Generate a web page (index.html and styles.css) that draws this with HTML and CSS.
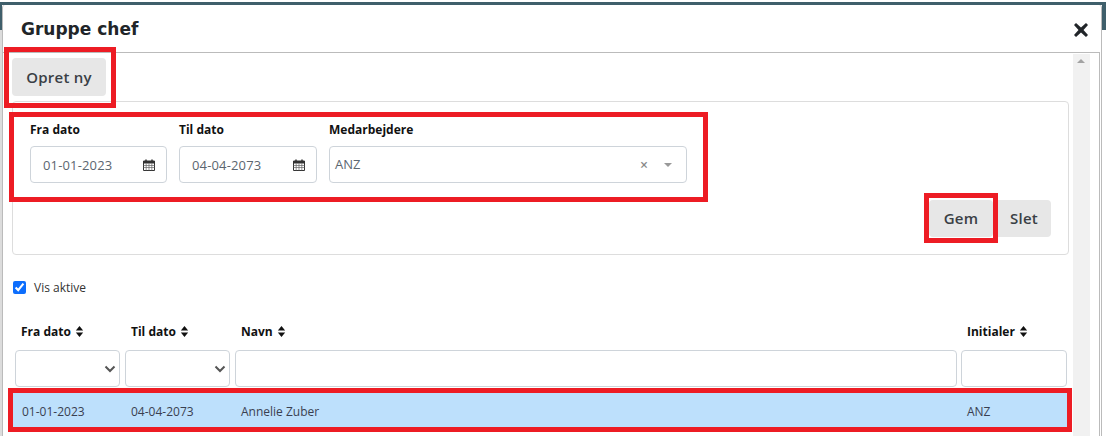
FILE: index.html
```html
<!DOCTYPE html>
<html lang="da">
<head>
<meta charset="utf-8">
<title>Gruppe chef</title>
<link rel="stylesheet" href="styles.css">
</head>
<body>
<div class="page">
  <div class="modal">
    <header class="modal-head">
      <h1 class="modal-title">Gruppe chef</h1>
      <svg class="close" viewBox="0 0 16 16" aria-label="Luk"><path d="M3 1 8 5.500 13 1l2 2-4.500 5L15 13l-2 2-5-4.500L3 15l-2-2 4.500-5L1 3z"/></svg>
    </header>
    <div class="modal-body">
      <div class="content">
        <button class="btn btn-new">Opret ny</button>
        <section class="card">
          <div class="fields">
            <div class="field field-date">
              <label class="label">Fra dato</label>
              <div class="input">
                <span class="val val-date">01-01-2023</span>
                <svg class="cal" viewBox="0 0 12 12"><use href="#cal"/></svg>
              </div>
            </div>
            <div class="field field-date">
              <label class="label">Til dato</label>
              <div class="input">
                <span class="val val-date">04-04-2073</span>
                <svg class="cal" viewBox="0 0 12 12"><use href="#cal"/></svg>
              </div>
            </div>
            <div class="field field-emp">
              <label class="label">Medarbejdere</label>
              <div class="input input-select">
                <span class="val">ANZ</span>
                <span class="clear">×</span>
                <span class="caret"></span>
              </div>
            </div>
          </div>
          <div class="actions">
            <button class="btn btn-sm">Gem</button>
            <button class="btn btn-sm btn-slet">Slet</button>
          </div>
        </section>
        <label class="check"><input type="checkbox" checked><span>Vis aktive</span></label>
        <div class="grid grid-head">
          <div class="th">Fra dato <svg class="sort" viewBox="0 0 8 12"><path d="M4 0 8 5H0zM4 12 0 7h8z"/></svg></div>
          <div class="th">Til dato <svg class="sort" viewBox="0 0 8 12"><path d="M4 0 8 5H0zM4 12 0 7h8z"/></svg></div>
          <div class="th">Navn <svg class="sort" viewBox="0 0 8 12"><path d="M4 0 8 5H0zM4 12 0 7h8z"/></svg></div>
          <div class="th">Initialer <svg class="sort" viewBox="0 0 8 12"><path d="M4 0 8 5H0zM4 12 0 7h8z"/></svg></div>
        </div>
        <div class="grid grid-filter">
          <div class="filter"><svg class="chev" viewBox="0 0 12 8"><path d="M1.500 1.500 6 6l4.500-4.500"/></svg></div>
          <div class="filter"><svg class="chev" viewBox="0 0 12 8"><path d="M1.500 1.500 6 6l4.500-4.500"/></svg></div>
          <div class="filter"></div>
          <div class="filter"></div>
        </div>
        <div class="grid grid-row">
          <div class="td">01-01-2023</div>
          <div class="td">04-04-2073</div>
          <div class="td">Annelie Zuber</div>
          <div class="td">ANZ</div>
        </div>
      </div>
      <div class="scrollbar"><span class="scroll-up"></span></div>
    </div>
  </div>
  <div class="mark mark-new"></div>
  <div class="mark mark-fields"></div>
  <div class="mark mark-save"></div>
  <div class="mark mark-row"></div>
</div>
<svg class="defs" width="0" height="0">
  <symbol id="cal" viewBox="0 0 12 12">
    <path d="M.5 2h11v9.500H.5z" fill="none" stroke="#333"/>
    <path d="M.5 2h11v2.500H.5z" fill="#333"/>
    <path d="M3 .5v2M9 .5v2" stroke="#333" stroke-width="1.500"/>
    <path d="M.5 6.500h11M.5 8.500h11M3.200 4.500v7M6 4.500v7M8.800 4.500v7" stroke="#666" stroke-width=".7"/>
  </symbol>
</svg>
</body>
</html>
```
FILE: styles.css
```css
* { box-sizing: border-box; }
html, body { margin: 0; padding: 0; background: #fff; }
body { width: 1106px; height: 441px; overflow: hidden; font-family: "Open Sans", "Noto Sans", sans-serif; color: #333; }
.page {
  position: relative; width: 1106px; height: 436px; padding-top: 5px;
  background:
    linear-gradient(#3f5f6b, #3f5f6b) 0 2px / 1106px 3px no-repeat,
    linear-gradient(#3f5f6b, #3f5f6b) 0 2px / 2px 28px no-repeat,
    linear-gradient(#3f5f6b, #3f5f6b) 1102px 2px / 4px 28px no-repeat,
    linear-gradient(#dcdcdc, #dcdcdc) 0 30px / 2px 406px no-repeat;
}
.modal { margin-left: 2px; width: 1100px; height: 431px; border-left: 1px solid #bbb; border-right: 1px solid #bbb; border-radius: 3px 3px 0 0; background: #fff; display: flex; flex-direction: column; }
.modal-head { height: 47px; padding: 0 12px 0 18px; flex: none; display: flex; align-items: center; justify-content: space-between; }
.modal-title { margin: 0; font: bold 17px "DejaVu Sans", sans-serif; color: #212529; padding-top: 1px; }
.close { width: 16px; height: 16px; fill: #212529; margin-top: 3px; }
.modal-body { flex: 1; margin-right: 1px; border-top: 1px solid #bbb; border-right: 1px solid #bbb; display: flex; min-height: 0; }
.content { width: 1070px; padding: 5px 0 0 9px; flex: none; }
.scrollbar { width: 17px; background: #f1f1f1; margin-top: 1px; padding: 5px 0 0 4px; }
.scroll-up { display: block; width: 0; height: 0; border: 4px solid transparent; border-top: 0; border-bottom: 4px solid #a3a3a3; }
.btn { border: 0; background: #e7e7e7; color: #3a3f45; border-radius: 4px; font: 550 15px "Open Sans", sans-serif; letter-spacing: .25px; padding: 0 0 1px; }
.btn-new { display: block; width: 94px; height: 38px; }
.card { margin-top: 5px; width: 1057px; height: 154px; border: 1px solid #ddd; border-radius: 4px; padding: 21px 17px 0; }
.fields { display: flex; gap: 12px; }
.label { display: block; font: bold 12px/14px "Open Sans", sans-serif; color: #111; height: 23px; }
.field-date { width: 138px; }
.field-date:first-child { width: 137px; }
.field-emp { width: 358px; }
.input { height: 37px; border: 1px solid #ced4da; border-radius: 4px; display: flex; align-items: center; padding: 1px 12px 0; font-size: 13px; color: #5c6670; }
.val-date { flex: 1; letter-spacing: .15px; }
.cal { width: 12px; height: 12px; margin: -1px -1px 0 0; }
.input-select { padding: 0 14px 0 5px; }
.input-select .val { flex: 1; margin-top: -1px; }
.clear { color: #888; font-size: 14px; font-weight: 600; margin-right: 16px; }
.caret { width: 0; height: 0; border: 4px solid transparent; border-bottom: 0; border-top: 4px solid #999; }
.actions { display: flex; justify-content: flex-end; gap: 4px; margin-top: 17px; }
.btn-sm { width: 64px; height: 37px; }
.btn-slet { width: 54px; border-radius: 0 4px 4px 0; }
.check { display: flex; align-items: center; gap: 8px; margin: 25px 0 0 1px; height: 14px; font-size: 12px; color: #333; }
.check input { margin: 0; width: 13px; height: 13px; accent-color: #0d6efd; }
.grid { display: grid; grid-template-columns: 105px 105px 722px 105px; column-gap: 5px; width: 1052px; margin-left: 3px; }
.grid-head { margin-top: 31px; height: 14px; }
.th { font: bold 12px/14px "Open Sans", sans-serif; color: #111; padding-left: 6px; white-space: nowrap; }
.th:last-child, .filter:last-child { margin-left: -1px; }
.sort { width: 9px; height: 11px; margin-left: 1px; fill: #111; vertical-align: -1px; }
.grid-filter { margin-top: 11px; }
.filter { height: 37px; border: 1px solid #ced4da; border-radius: 4px; display: flex; align-items: center; justify-content: flex-end; padding-right: 3px; }
.chev { width: 12px; height: 8px; fill: none; stroke: #555; stroke-width: 2; }
.grid-row { margin-top: 5px; margin-left: 1px; width: 1054px; background: #bde0fc; height: 35px; align-items: center; font-size: 12px; color: #3a3f50; grid-template-columns: 110px 110px 726px 108px; column-gap: 0; padding-top: 3px; }
.td { padding-left: 8px; }
.td:first-child { padding-left: 9px; }
.mark { position: absolute; border: 5px solid #ed1c24; pointer-events: none; }
.mark-new { left: 4px; top: 47px; width: 112px; height: 61px; }
.mark-fields { left: 9px; top: 112px; width: 699px; height: 90px; }
.mark-save { left: 924px; top: 193px; width: 74px; height: 50px; }
.mark-row { left: 8px; top: 388px; width: 1064px; height: 44px; }
.defs { position: absolute; }
```
